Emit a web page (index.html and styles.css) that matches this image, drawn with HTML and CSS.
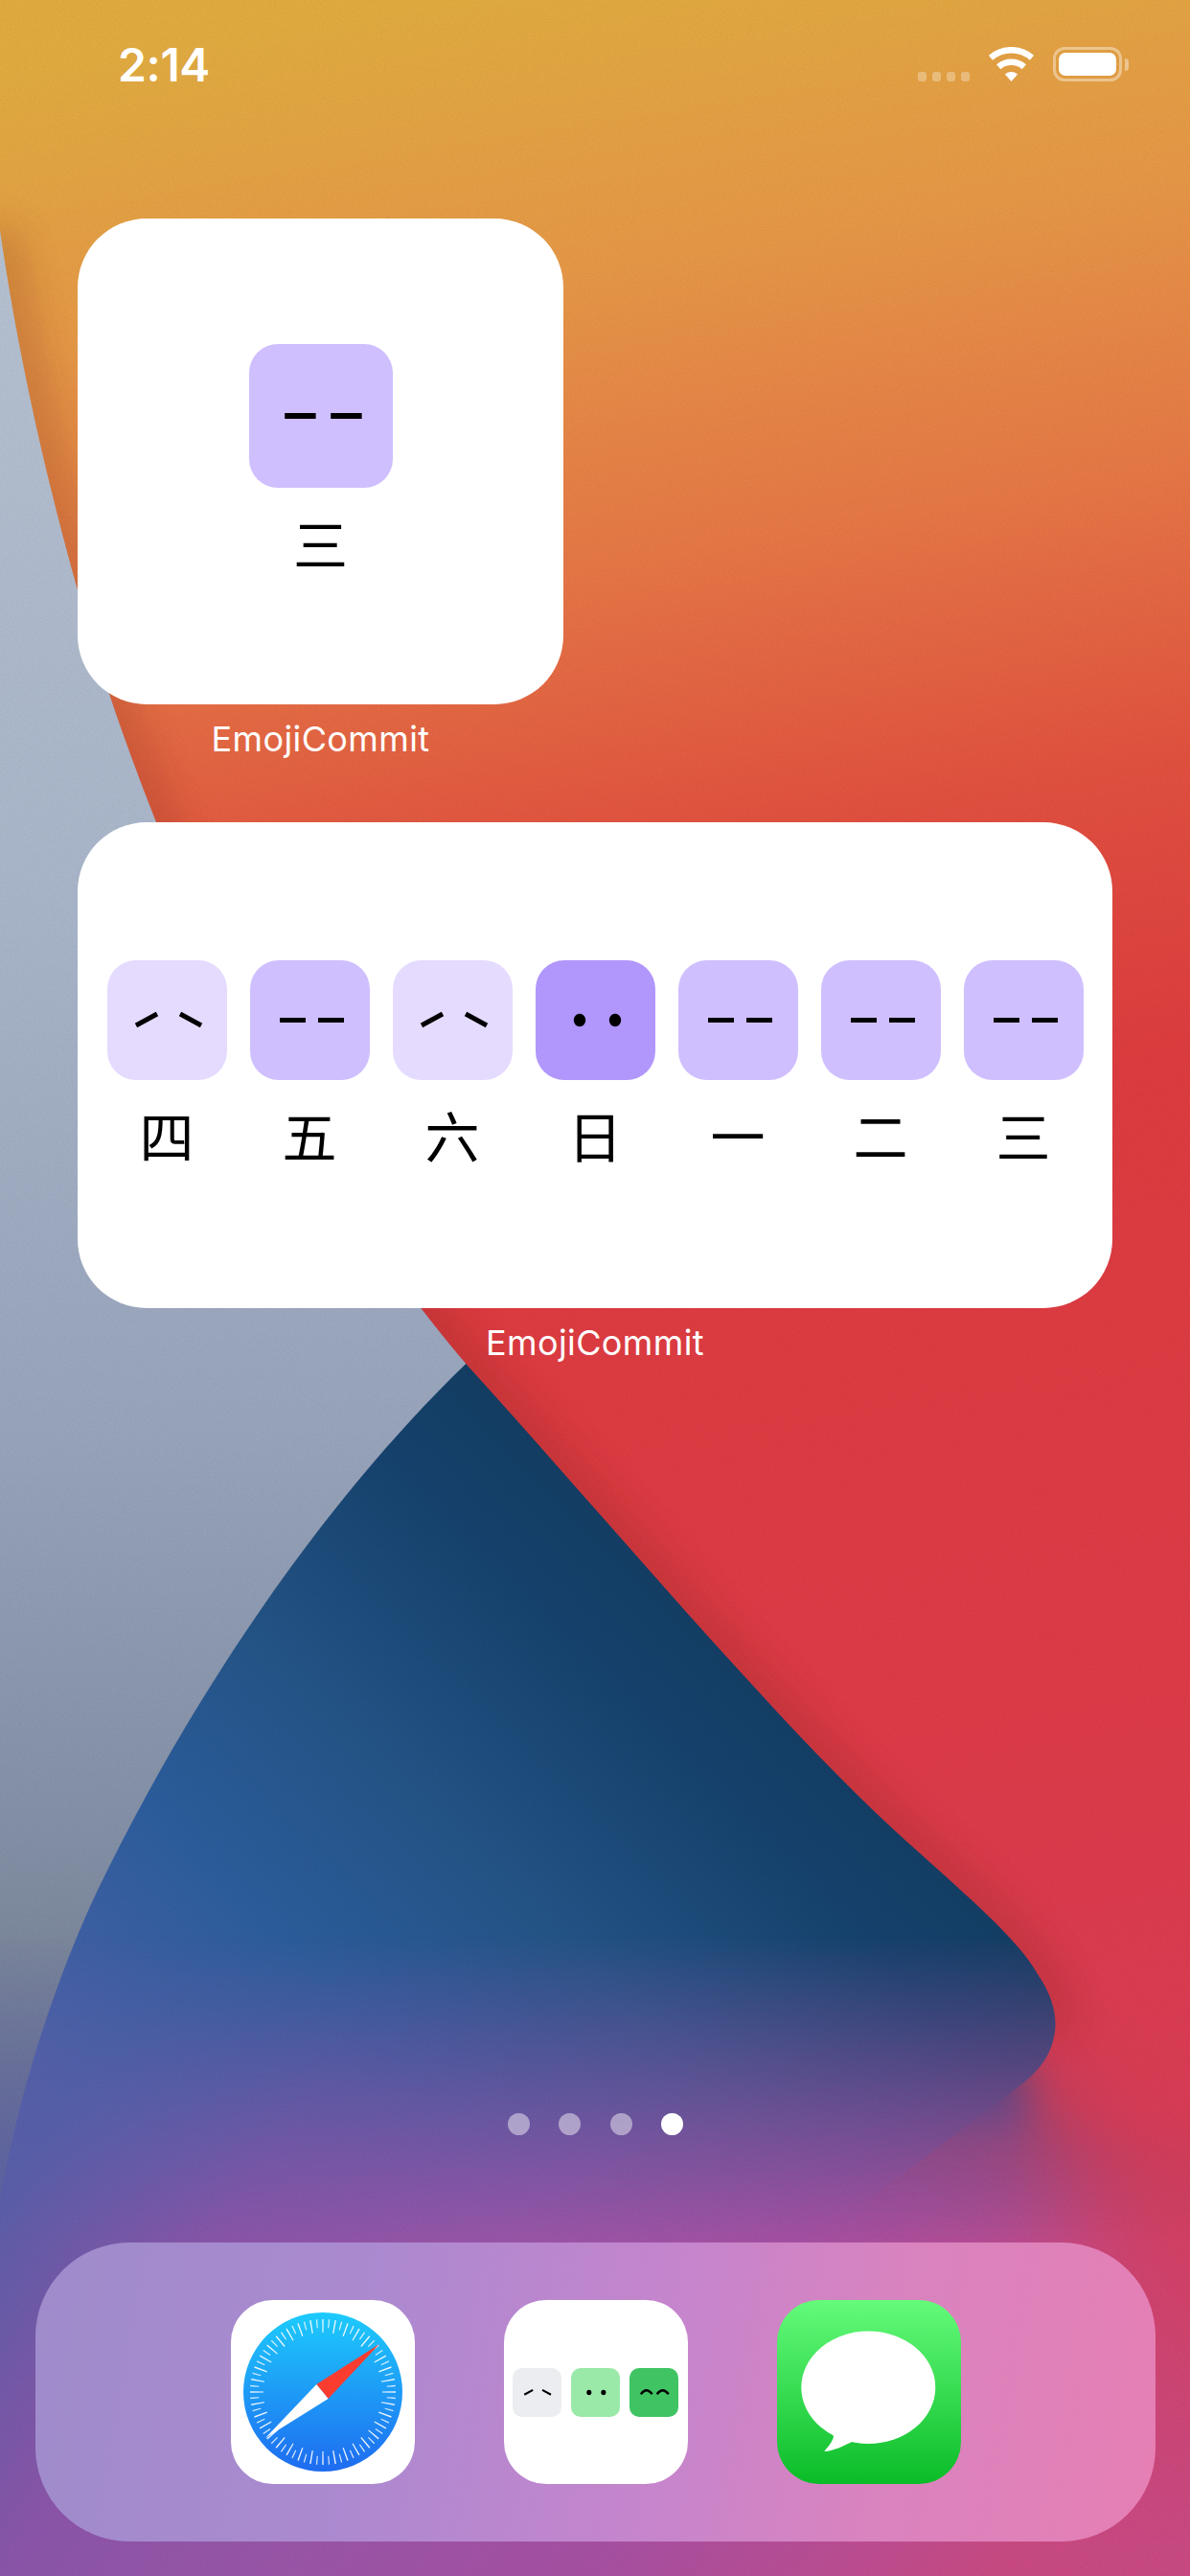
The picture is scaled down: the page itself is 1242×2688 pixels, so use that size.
FILE: index.html
```html
<!DOCTYPE html>
<html lang="en">
<head>
    <meta charset="UTF-8">
    <title>Home Screen</title>
    <link rel="stylesheet" href="styles.css">
</head>
<body>
    <div class="screen">
        <!-- wallpaper -->
        <svg class="wallpaper" viewBox="0 0 1242 2688" xmlns="http://www.w3.org/2000/svg">
            <defs>
                <linearGradient id="grey-fill" gradientUnits="userSpaceOnUse" x1="0" y1="200" x2="0" y2="2350">
                    <stop offset="0" stop-color="#b6c1d0"/>
                    <stop offset="0.33" stop-color="#a9b5c9"/>
                    <stop offset="0.6" stop-color="#98a4bb"/>
                    <stop offset="0.8" stop-color="#838fa5"/>
                    <stop offset="1" stop-color="#667181"/>
                </linearGradient>
                <linearGradient id="blue-fill" gradientUnits="userSpaceOnUse" x1="900" y1="1700" x2="100" y2="2500">
                    <stop offset="0" stop-color="#123a5a"/>
                    <stop offset="0.2" stop-color="#16426e"/>
                    <stop offset="0.4" stop-color="#245486"/>
                    <stop offset="0.58" stop-color="#2c5d9c"/>
                    <stop offset="0.82" stop-color="#4c62aa"/>
                    <stop offset="1" stop-color="#5f5da8"/>
                </linearGradient>
                <linearGradient id="warm-fill" gradientUnits="userSpaceOnUse" x1="450" y1="0" x2="820" y2="2300">
                    <stop offset="0" stop-color="#e0ab40"/>
                    <stop offset="0.13" stop-color="#e59747"/>
                    <stop offset="0.26" stop-color="#e57746"/>
                    <stop offset="0.39" stop-color="#e0503f"/>
                    <stop offset="0.52" stop-color="#dc3c3f"/>
                    <stop offset="0.8" stop-color="#dc3b47"/>
                    <stop offset="1" stop-color="#d83c56"/>
                </linearGradient>
                <linearGradient id="low-fill" gradientUnits="userSpaceOnUse" x1="-100" y1="2250" x2="900" y2="2900">
                    <stop offset="0.09" stop-color="#5b5ea8"/>
                    <stop offset="0.27" stop-color="#8a55a8"/>
                    <stop offset="0.48" stop-color="#9a55a8"/>
                    <stop offset="0.7" stop-color="#a650a2"/>
                    <stop offset="0.9" stop-color="#bd4d90"/>
                    <stop offset="1" stop-color="#c84a82"/>
                </linearGradient>
                <linearGradient id="low-fade" gradientUnits="userSpaceOnUse" x1="0" y1="2020" x2="0" y2="2340">
                    <stop offset="0" stop-color="#000"/>
                    <stop offset="1" stop-color="#fff"/>
                </linearGradient>
                <linearGradient id="warm-fade" gradientUnits="userSpaceOnUse" x1="0" y1="2200" x2="0" y2="2650">
                    <stop offset="0" stop-color="#fff"/>
                    <stop offset="1" stop-color="#000"/>
                </linearGradient>
                <mask id="low-mask" maskUnits="userSpaceOnUse" x="0" y="0" width="1242" height="2688">
                    <rect width="1242" height="2688" fill="url(#low-fade)"/>
                </mask>
                <mask id="warm-mask" maskUnits="userSpaceOnUse" x="0" y="0" width="1242" height="2688">
                    <rect width="1242" height="2688" fill="url(#warm-fade)"/>
                    <path d="M600 2150 L1070 2150 L1072 2235 L600 2235 Z" fill="#000" filter="url(#fade-edge)"/>
                    <path d="M600 2205 L1090 2205 L1150 2400 L1190 2720 L600 2720 Z" fill="#000" filter="url(#fade-wide)"/>
                </mask>
                <clipPath id="warm-clip">
                    <path d="M-10 190 L0 240 C20 380 60 560 115 727 C190 950 320 1230 488 1425 C620 1570 800 1785 923 1900 C985 1958 1060 2018 1083 2060 C1100 2085 1103 2105 1101 2120 C1098 2140 1090 2155 1070 2172 L900 2300 L900 2700 L1252 2700 L1252 -10 L-10 -10 Z"/>
                </clipPath>
                <filter id="soft" x="-20%" y="-20%" width="140%" height="140%">
                    <feGaussianBlur stdDeviation="20"/>
                </filter>
                <filter id="fade-edge" x="-20%" y="-40%" width="140%" height="180%">
                    <feGaussianBlur stdDeviation="22"/>
                </filter>
                <filter id="fade-wide" x="-30%" y="-30%" width="160%" height="160%">
                    <feGaussianBlur stdDeviation="55"/>
                </filter>
                <filter id="grain" x="0" y="0" width="100%" height="100%">
                    <feTurbulence type="fractalNoise" baseFrequency="0.7" numOctaves="2" seed="4"/>
                    <feColorMatrix values="0 0 0 0 0  0 0 0 0 0  0 0 0 0 0  0.5 0 0 0 -0.17"/>
                </filter>
            </defs>
            <rect width="1242" height="2688" fill="url(#grey-fill)"/>
            <path d="M500 1410 C340 1560 200 1770 103 1970 C60 2060 20 2180 0 2296 L0 2688 L1242 2688 L1242 1400 Z" fill="url(#blue-fill)"/>
            <rect y="2000" width="1242" height="688" fill="url(#low-fill)" mask="url(#low-mask)"/>
            <g mask="url(#warm-mask)">
                <g clip-path="url(#warm-clip)">
                    <rect width="1242" height="2688" fill="url(#warm-fill)"/>
                    <path d="M0 240 C20 380 60 560 115 727 C190 950 320 1230 488 1425 C620 1570 800 1785 923 1900 C985 1958 1060 2018 1083 2060 C1100 2085 1103 2105 1101 2120" fill="none" stroke="#7a2018" stroke-width="30" opacity="0.3" filter="url(#soft)"/>
                </g>
            </g>
            <rect width="1242" height="2688" filter="url(#grain)" opacity="0.16"/>
        </svg>

        <!-- face shapes used by the tiles -->
        <svg class="face-defs" xmlns="http://www.w3.org/2000/svg">
            <symbol id="face-sad" viewBox="0 0 125 125">
                <path d="M30 68 L52 56 M76 56 L98 68" fill="none" stroke="#000" stroke-width="5"/>
            </symbol>
            <symbol id="face-flat" viewBox="0 0 125 125">
                <path d="M31 62.5 H58 M71 62.5 H98" fill="none" stroke="#000" stroke-width="5.2"/>
            </symbol>
            <symbol id="face-dots" viewBox="0 0 125 125">
                <ellipse cx="46" cy="62.5" rx="6.2" ry="6.8"/>
                <ellipse cx="83" cy="62.5" rx="6.2" ry="6.8"/>
            </symbol>
            <symbol id="face-happy" viewBox="0 0 125 125">
                <path d="M29 67 Q43 47 58 67 M70 67 Q85 47 100 67" fill="none" stroke="#000" stroke-width="6"/>
            </symbol>
        </svg>

        <div class="status-bar">
            <div class="time">2:14</div>
            <div class="status-icons">
                <div class="signal">
                    <span></span><span></span><span></span><span></span>
                </div>
                <svg class="wifi" viewBox="0 0 47 36" xmlns="http://www.w3.org/2000/svg">
                    <path d="M2 11.3 A32.75 32.75 0 0 1 45 11.3" fill="none" stroke="#fff" stroke-width="6.6"/>
                    <path d="M10.2 20.7 A20.3 20.3 0 0 1 36.8 20.7" fill="none" stroke="#fff" stroke-width="6.6"/>
                    <path d="M23.5 36 L16.94 28.45 A10 10 0 0 1 30.06 28.45 Z" fill="#fff"/>
                </svg>
                <div class="battery">
                    <div class="battery-body"><div class="battery-level"></div></div>
                    <div class="battery-nub"></div>
                </div>
            </div>
        </div>

        <div class="home">
            <div class="widget-cell">
                <div class="widget widget-small">
                    <div class="day day-big">
                        <div class="tile tile-mid"><svg class="face"><use href="#face-flat"/></svg></div>
                        <div class="day-name">三</div>
                    </div>
                </div>
                <div class="app-name">EmojiCommit</div>
            </div>

            <div class="widget-cell">
                <div class="widget widget-wide">
                    <div class="day">
                        <div class="tile tile-light"><svg class="face"><use href="#face-sad"/></svg></div>
                        <div class="day-name">四</div>
                    </div>
                    <div class="day">
                        <div class="tile tile-mid"><svg class="face"><use href="#face-flat"/></svg></div>
                        <div class="day-name">五</div>
                    </div>
                    <div class="day">
                        <div class="tile tile-light"><svg class="face"><use href="#face-sad"/></svg></div>
                        <div class="day-name">六</div>
                    </div>
                    <div class="day">
                        <div class="tile tile-strong"><svg class="face"><use href="#face-dots"/></svg></div>
                        <div class="day-name">日</div>
                    </div>
                    <div class="day">
                        <div class="tile tile-mid"><svg class="face"><use href="#face-flat"/></svg></div>
                        <div class="day-name">一</div>
                    </div>
                    <div class="day">
                        <div class="tile tile-mid"><svg class="face"><use href="#face-flat"/></svg></div>
                        <div class="day-name">二</div>
                    </div>
                    <div class="day">
                        <div class="tile tile-mid"><svg class="face"><use href="#face-flat"/></svg></div>
                        <div class="day-name">三</div>
                    </div>
                </div>
                <div class="app-name">EmojiCommit</div>
            </div>
        </div>

        <div class="page-dots">
            <span class="page-dot"></span>
            <span class="page-dot"></span>
            <span class="page-dot"></span>
            <span class="page-dot page-dot-on"></span>
        </div>

        <div class="dock">
            <div class="app-icon app-safari">
                <svg viewBox="0 0 192 192" xmlns="http://www.w3.org/2000/svg">
                    <defs>
                        <linearGradient id="safari-fill" x1="0" y1="0" x2="0" y2="1">
                            <stop offset="0" stop-color="#1dcbfc"/>
                            <stop offset="1" stop-color="#1e6bf0"/>
                        </linearGradient>
                    </defs>
                    <circle cx="96" cy="96" r="83" fill="url(#safari-fill)"/>
                    <circle cx="96" cy="96" r="69" fill="none" stroke="#fff" stroke-opacity="0.9" stroke-width="14" pathLength="360" stroke-dasharray="1.1 8.9" stroke-dashoffset="0.55"/>
                    <circle cx="96" cy="96" r="71.5" fill="none" stroke="#fff" stroke-opacity="0.8" stroke-width="9" pathLength="360" stroke-dasharray="1 9" stroke-dashoffset="-4.5"/>
                    <polygon points="155,46 89.3,88 101.6,103" fill="#fb3c2f"/>
                    <polygon points="36,144 89.3,88 101.6,103" fill="#fff"/>
                </svg>
            </div>
            <div class="app-icon app-emoji">
                <div class="mini-tile mini-grey"><svg class="face"><use href="#face-sad"/></svg></div>
                <div class="mini-tile mini-green"><svg class="face"><use href="#face-dots"/></svg></div>
                <div class="mini-tile mini-dark"><svg class="face"><use href="#face-happy"/></svg></div>
            </div>
            <div class="app-icon app-messages">
                <svg viewBox="0 0 192 192" xmlns="http://www.w3.org/2000/svg">
                    <ellipse cx="95.3" cy="91.3" rx="70" ry="58.7" fill="#fff"/>
                    <path d="M52 133 C58 138 60 141 58.3 145 C56.5 150 52 154 49.3 158 C58 158 70 152 80 147 Z" fill="#fff"/>
                </svg>
            </div>
        </div>
    </div>
</body>
</html>
```

FILE: styles.css
```css
* {
    box-sizing: border-box;
}
body {
    margin: 0;
    font-family: 'Inter', 'Noto Sans CJK SC', sans-serif;
}
.screen {
    position: relative;
    display: flex;
    flex-direction: column;
    width: 1242px;
    height: 2688px;
    overflow: hidden;
    color: white;
}
.wallpaper {
    position: absolute;
    top: 0;
    left: 0;
    width: 1242px;
    height: 2688px;
}
.face-defs {
    position: absolute;
    width: 0;
    height: 0;
}

/* status bar */
.status-bar {
    position: relative;
    display: flex;
    justify-content: space-between;
    padding: 42px 64px 0 123px;
    height: 228px;
}
.time {
    font-size: 48px;
    font-weight: 600;
    line-height: 52px;
    letter-spacing: -0.4px;
}
.status-icons {
    display: flex;
    align-items: flex-start;
    gap: 20px;
    padding-top: 7px;
}
.signal {
    display: flex;
    gap: 5.5px;
    margin-top: 26px;
}
.signal span {
    width: 9.5px;
    height: 10px;
    border-radius: 3px;
    background-color: rgba(255, 255, 255, 0.3);
}
.wifi {
    width: 47px;
    height: 36px;
}
.battery {
    display: flex;
    align-items: center;
    gap: 3px;
}
.battery-body {
    width: 72px;
    height: 36px;
    padding: 3px;
    border: 3px solid rgba(255, 255, 255, 0.4);
    border-radius: 12px;
}
.battery-level {
    width: 100%;
    height: 100%;
    border-radius: 7px;
    background-color: white;
}
.battery-nub {
    width: 4px;
    height: 13px;
    border-radius: 0 4px 4px 0;
    background-color: rgba(255, 255, 255, 0.4);
}

/* widgets */
.home {
    position: relative;
    display: flex;
    flex-direction: column;
    align-items: flex-start;
    gap: 66px;
    padding-left: 81px;
}
.widget-cell {
    display: flex;
    flex-direction: column;
    align-items: center;
}
.widget {
    display: flex;
    justify-content: center;
    align-items: center;
    height: 507px;
    border-radius: 72px;
    background-color: white;
    color: black;
}
.widget-small {
    width: 507px;
}
.widget-wide {
    width: 1080px;
    gap: 24px;
}
.app-name {
    margin-top: 15px;
    font-size: 36px;
    line-height: 42px;
    letter-spacing: 0.4px;
    color: white;
}
.day {
    display: flex;
    flex-direction: column;
    align-items: center;
    padding-bottom: 7px;
}
.tile {
    width: 125px;
    height: 125px;
    border-radius: 30px;
}
.day-big .tile {
    width: 150px;
    height: 150px;
}
.tile-light {
    background-color: #e5dbff;
}
.tile-mid {
    background-color: #d0bfff;
}
.tile-strong {
    background-color: #b197fc;
}
.face {
    display: block;
    width: 100%;
    height: 100%;
}
.day-name {
    margin-top: 24px;
    font-family: 'Noto Sans CJK SC', sans-serif;
    font-size: 57px;
    line-height: 64px;
    color: black;
}

/* page dots */
.page-dots {
    position: relative;
    display: flex;
    justify-content: center;
    gap: 30.5px;
    margin-top: auto;
    margin-bottom: 112px;
    padding-left: 1px;
}
.page-dot {
    width: 23px;
    height: 23px;
    border-radius: 50%;
    background-color: rgba(255, 255, 255, 0.45);
}
.page-dot-on {
    background-color: white;
}

/* dock */
.dock {
    position: relative;
    display: flex;
    justify-content: center;
    align-items: center;
    gap: 93px;
    width: 1169px;
    height: 312px;
    margin: 0 0 36px 37px;
    border-radius: 98px;
    background-image: linear-gradient(100deg, #9e8ccb 0%, #ac89d0 30%, #c585cd 55%, #d983bf 75%, #e67fb4 100%);
}
.app-icon {
    width: 192px;
    height: 192px;
    border-radius: 44px;
    overflow: hidden;
}
.app-icon svg {
    display: block;
}
.app-safari {
    background-color: white;
}
.app-emoji {
    display: flex;
    align-items: center;
    justify-content: center;
    gap: 10px;
    background-color: white;
}
.app-messages {
    background-image: linear-gradient(#64fb7a, #0abc28);
}
.mini-tile {
    width: 51px;
    height: 51px;
    border-radius: 10px;
}
.mini-grey {
    background-color: #ebedf0;
}
.mini-green {
    background-color: #9be9a8;
}
.mini-dark {
    background-color: #40c463;
}
```
